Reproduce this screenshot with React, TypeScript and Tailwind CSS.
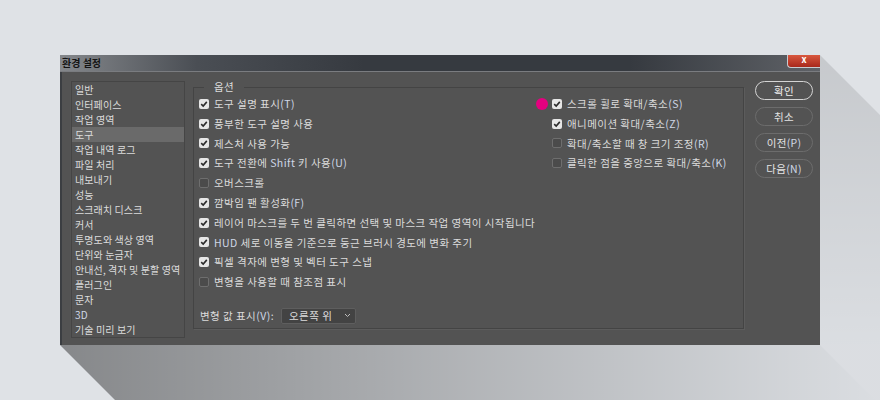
import React from "react";

type Opt = { label: string; checked: boolean };

const categories = [
  "일반",
  "인터페이스",
  "작업 영역",
  "도구",
  "작업 내역 로그",
  "파일 처리",
  "내보내기",
  "성능",
  "스크래치 디스크",
  "커서",
  "투명도와 색상 영역",
  "단위와 눈금자",
  "안내선, 격자 및 분할 영역",
  "플러그인",
  "문자",
  "3D",
  "기술 미리 보기",
];

const leftOptions: Opt[] = [
  { label: "도구 설명 표시(T)", checked: true },
  { label: "풍부한 도구 설명 사용", checked: true },
  { label: "제스처 사용 가능", checked: true },
  { label: "도구 전환에 Shift 키 사용(U)", checked: true },
  { label: "오버스크롤", checked: false },
  { label: "깜박임 팬 활성화(F)", checked: true },
  { label: "레이어 마스크를 두 번 클릭하면 선택 및 마스크 작업 영역이 시작됩니다", checked: true },
  { label: "HUD 세로 이동을 기준으로 둥근 브러시 경도에 변화 주기", checked: true },
  { label: "픽셀 격자에 변형 및 벡터 도구 스냅", checked: true },
  { label: "변형을 사용할 때 참조점 표시", checked: false },
];

const rightOptions: Opt[] = [
  { label: "스크롤 휠로 확대/축소(S)", checked: true },
  { label: "애니메이션 확대/축소(Z)", checked: true },
  { label: "확대/축소할 때 창 크기 조정(R)", checked: false },
  { label: "클릭한 점을 중앙으로 확대/축소(K)", checked: false },
];

const buttons = ["확인", "취소", "이전(P)", "다음(N)"];

// latin bits render with a slightly bluish tint in the original
function Label({ text }: { text: string }) {
  const parts = text.split(/([A-Za-z()]+)/);
  return (
    <span className="whitespace-nowrap">
      {parts.map((p, i) =>
        /[A-Za-z()]/.test(p) ? (
          <span key={i} className="text-[#cfd7e6]">
            {p}
          </span>
        ) : (
          <span key={i}>{p}</span>
        )
      )}
    </span>
  );
}

function Checkbox({ checked }: { checked: boolean }) {
  if (!checked) {
    return <span className="block h-[10px] w-[10px] shrink-0 rounded-[2px] border border-[#6e6e6e] bg-[#4b4b4b]" />;
  }
  return (
    <span className="flex h-[10px] w-[10px] shrink-0 items-center justify-center rounded-[2px] bg-[#e6e6e6]">
      <svg width="8" height="8" viewBox="0 0 8 8">
        <path d="M1.2 4.1 L3.2 6 L6.8 1.9" fill="none" stroke="#2b2b2b" strokeWidth="1.6" />
      </svg>
    </span>
  );
}

function OptionRow({ opt }: { opt: Opt }) {
  return (
    <div className="flex h-[19.8px] items-center gap-[5px]">
      <Checkbox checked={opt.checked} />
      <Label text={opt.label} />
    </div>
  );
}

export default function App() {
  return (
    <div className="relative h-[400px] w-[880px] overflow-hidden bg-[#dfe2e6] pl-[60px] pt-[55px] font-['Noto_Sans_CJK_KR',sans-serif] text-[10px] text-[#dcdcdc]">
      {/* long shadow */}
      <svg className="absolute inset-0" width="880" height="400">
        <defs>
          <linearGradient id="shBottom" gradientUnits="userSpaceOnUse" x1="60" y1="0" x2="880" y2="0">
            <stop offset="0" stopColor="#000" stopOpacity="0.4" />
            <stop offset="0.5" stopColor="#000" stopOpacity="0.2" />
            <stop offset="1" stopColor="#000" stopOpacity="0.02" />
          </linearGradient>
          <linearGradient id="shRight" gradientUnits="userSpaceOnUse" x1="0" y1="55" x2="0" y2="345">
            <stop offset="0" stopColor="#000" stopOpacity="0.11" />
            <stop offset="1" stopColor="#000" stopOpacity="0.02" />
          </linearGradient>
        </defs>
        <polygon points="60,345 820,345 1020,545 260,545" fill="url(#shBottom)" />
        <polygon points="820,55 1020,255 1020,545 820,345" fill="url(#shRight)" />
      </svg>

      <div className="relative flex h-[290px] w-[760px] flex-col bg-[#535353]">
        {/* title bar */}
        <div className="flex h-[17px] items-start justify-between border-b border-[#7a7c80] bg-[linear-gradient(90deg,#85888c_0%,#4a4e54_18%,#363a40_40%,#363a40_75%,#5f6267_100%)]">
          <span className="pl-[2px] pt-[1px] text-[10px] leading-[13px] font-bold text-[#141414]">환경 설정</span>
          <div className="flex h-[13px] w-[33px] items-start justify-center rounded-bl-[4px] border-b border-l border-[#c9cbcf] bg-[linear-gradient(180deg,#d9583f,#a8281b)]">
            <span className="text-[9px] leading-[9px] font-bold text-white">x</span>
          </div>
        </div>

        {/* body */}
        <div className="flex flex-1 border-l-2 border-[#3b3e42] pl-[9px] pt-[9px]">
          {/* category list */}
          <div className="flex h-[257px] w-[114px] flex-col border border-[#454545] tracking-[0.1px]">
            {categories.map((c) => (
              <div
                key={c}
                className={`flex h-[15px] shrink-0 items-center pl-[3px] whitespace-nowrap ${c === "도구" ? "bg-[#6a6a6a]" : ""}`}
              >
                {c === "3D" ? <span className="text-[#cfd7e6]">{c}</span> : c}
              </div>
            ))}
          </div>

          {/* options group */}
          <div className="relative ml-[8px] mt-[6px] flex h-[242px] w-[551px] flex-col border border-[#444444] pl-[5px] pt-[6px] text-[10.5px] tracking-[0.45px] shadow-[1px_1px_0_#5c5c5c]">
            <span className="absolute left-[10px] top-[-8px] bg-[#535353] px-[10px] leading-[14px]">옵션</span>
            <div className="flex">
              <div className="flex w-[337px] flex-col">
                {leftOptions.map((o) => (
                  <OptionRow key={o.label} opt={o} />
                ))}
              </div>
              <div className="flex flex-col">
                {rightOptions.map((o, i) => (
                  <div key={o.label} className="flex h-[19.8px] items-center gap-[4px]">
                    {i === 0 ? (
                      <span className="h-[12px] w-[12px] shrink-0 rounded-full bg-[#e4007f]" />
                    ) : (
                      <span className="w-[12px] shrink-0" />
                    )}
                    <OptionRow opt={o} />
                  </div>
                ))}
              </div>
            </div>
            <div className="mt-[16px] flex items-center pl-[1px]">
              <span className="w-[81px]">
                <Label text="변형 값 표시(V):" />
              </span>
              <div className="flex h-[16px] w-[75px] items-center justify-between rounded-[2px] border border-[#5e5e5e] bg-[#434343] pl-[7px] pr-[4px]">
                <span>오른쪽 위</span>
                <svg width="7" height="5" viewBox="0 0 7 5">
                  <path d="M1 1 L3.5 3.5 L6 1" fill="none" stroke="#bdbdbd" strokeWidth="1" />
                </svg>
              </div>
            </div>
          </div>

          {/* buttons */}
          <div className="ml-[11px] flex w-[58px] flex-col gap-[7px] text-[10.5px] tracking-[0.3px]">
            {buttons.map((b, i) => (
              <div
                key={b}
                className={`flex h-[19px] items-center justify-center rounded-full ${
                  i === 0 ? "border-[1.5px] border-[#d4d4d4] text-[#f0f0f0]" : "border border-[#6c6c6c] text-[#e4e4e4]"
                }`}
              >
                <Label text={b} />
              </div>
            ))}
          </div>
        </div>
      </div>
    </div>
  );
}
